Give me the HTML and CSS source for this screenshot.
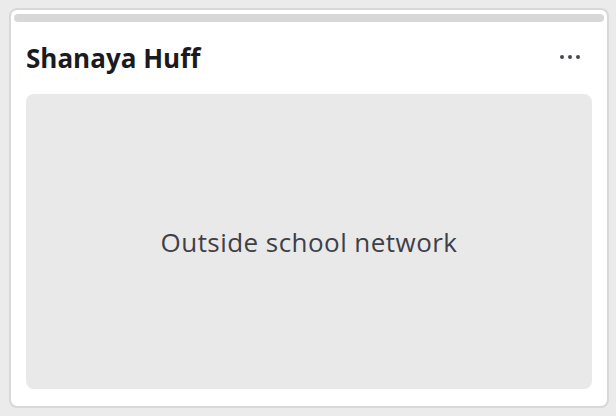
FILE: index.html
```html
<!DOCTYPE html>
<html lang="en">
  <head>
    <meta charset="UTF-8" />
    <meta name="viewport" content="width=device-width, initial-scale=1.0" />
    <title>Shanaya Huff</title>
    <link rel="stylesheet" href="styles.css">
  </head>
  <body>
    <div class="card">
      <div class="barra"></div>
      <div class="cabecera">
        <h1>Shanaya Huff</h1>
        <button class="menu" aria-label="More">
          <span></span><span></span><span></span>
        </button>
      </div>
      <div class="estado">Outside school network</div>
    </div>
  </body>
</html>
```

FILE: styles.css
```css
* {
  box-sizing: border-box;
  margin: 0;
  padding: 0;
  font-family: 'Open Sans', sans-serif;
}

body {
  background: #ebebeb;
  padding: 8px 7px 8px 9px;
  height: 416px;
}

.card {
  background: white;
  border: 2px solid #d8d8d8;
  border-radius: 8px;
  width: 600px;
  height: 400px;
  padding: 4px 3px 17px 15px;
  display: flex;
  flex-direction: column;
}

.barra {
  height: 8px;
  border-radius: 4px;
  background: #d8d8d8;
  margin-left: -12px;
}

.cabecera {
  display: flex;
  align-items: center;
  justify-content: space-between;
  height: 72px;
  padding-right: 24px;
}

h1 {
  font-size: 26px;
  font-weight: bold;
  color: #1b1b1f;
}

.menu {
  background: none;
  border: none;
  display: flex;
  gap: 4px;
  cursor: pointer;
  margin-top: -2px;
}

.menu span {
  width: 4px;
  height: 4px;
  border-radius: 50%;
  background: #4a4a52;
}

.estado {
  flex: 1;
  background: #e9e9e9;
  border-radius: 8px;
  margin-right: 12px;
  display: flex;
  align-items: center;
  justify-content: center;
  font-size: 26px;
  letter-spacing: 0.45px;
  color: #3f3f48;
}
```
